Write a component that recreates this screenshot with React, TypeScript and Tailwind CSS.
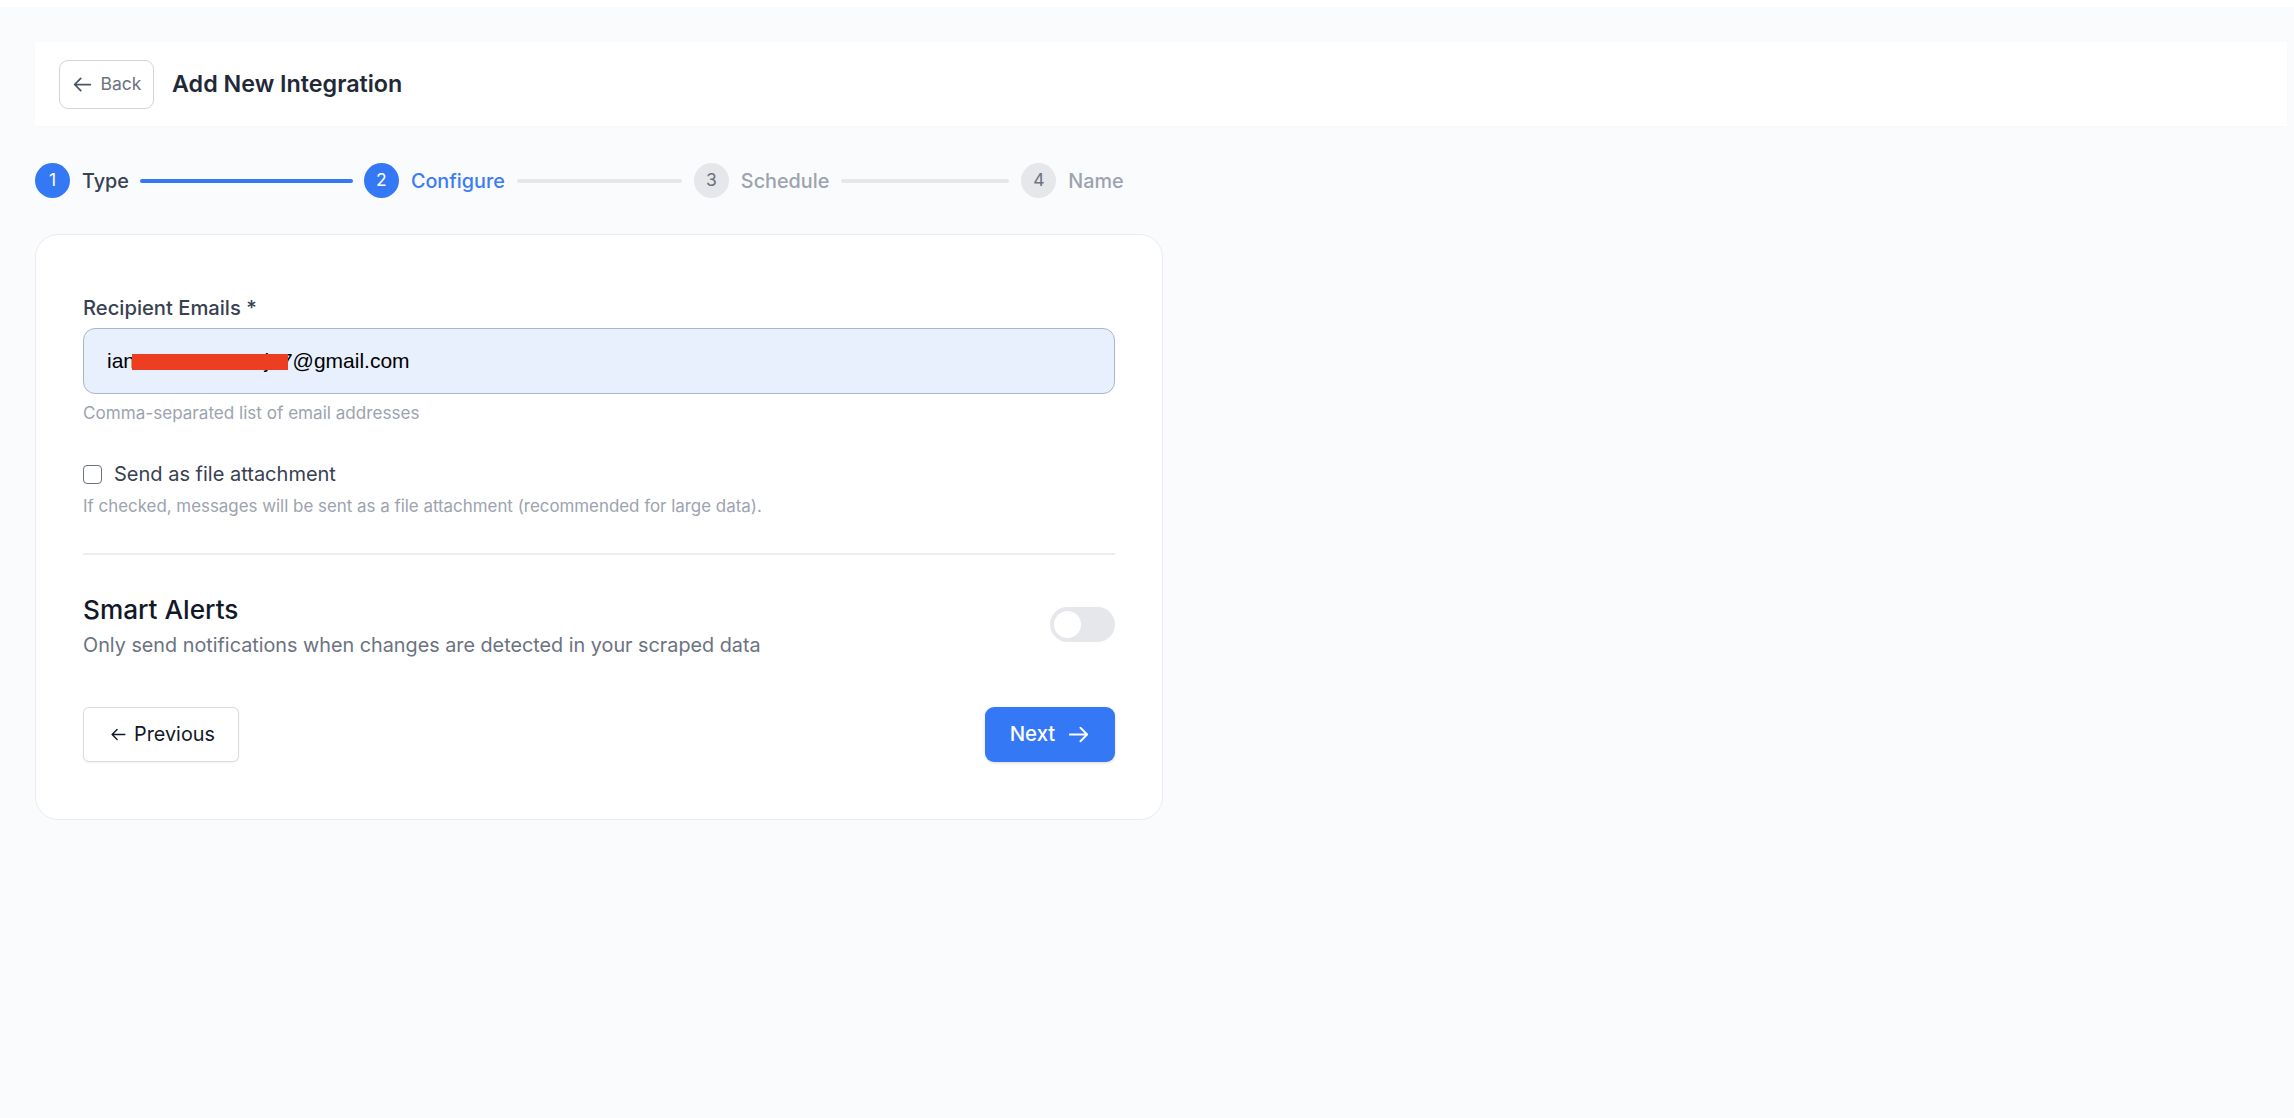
import { HiOutlineArrowLeft, HiOutlineArrowRight } from "react-icons/hi";

const steps = [
  { n: 1, label: "Type", state: "done", line: "mx-[11px] w-[213px] bg-[#3578f6]" },
  { n: 2, label: "Configure", state: "active", line: "mx-3 w-[165px] bg-[#e5e7eb]" },
  { n: 3, label: "Schedule", state: "todo", line: "mx-3 w-[168px] bg-[#e5e7eb]" },
  { n: 4, label: "Name", state: "todo", line: "" },
];

function Stepper() {
  return (
    <div className="mt-[37px] flex items-center">
      {steps.map((s) => (
        <div key={s.n} className="flex items-center">
          <div
            className={`flex h-[35px] w-[35px] items-center justify-center rounded-full text-[17.5px] ${
              s.state === "todo" ? "bg-[#e5e7eb] text-[#6b7280]" : "bg-[#3578f6] text-white"
            }`}
          >
            {s.n}
          </div>
          <span
            className={`ml-3 pt-[2px] text-[19.8px] font-medium ${
              s.state === "done"
                ? "text-[#374151]"
                : s.state === "active"
                  ? "text-[#3b7cf6]"
                  : "text-[#9ca3af]"
            }`}
          >
            {s.label}
          </span>
          {s.line && <div className={`h-1 rounded-full ${s.line}`} />}
        </div>
      ))}
    </div>
  );
}

export default function App() {
  return (
    <div className="min-h-screen bg-white pt-[7px] font-[Inter,sans-serif]">
      <div className="min-h-[1111px] bg-[#fafbfd] pb-[40px] pl-[35px] pr-[7px] pt-[35px]">
        {/* Header */}
        <div className="flex h-[84px] items-center gap-[18px] bg-white pl-[24px] shadow-[0_1px_2px_rgba(0,0,0,0.02)]">
          <button className="flex h-[49px] w-[95px] items-center justify-center gap-[8px] rounded-[9px] border border-[#d1d5db] bg-white text-[17.5px] text-[#6b7280]">
            <HiOutlineArrowLeft className="h-[21px] w-[21px] text-[#4b5563]" />
            Back
          </button>
          <h1 className="pt-[1px] text-[23.3px] font-semibold text-[#1f2937]">Add New Integration</h1>
        </div>

        <Stepper />

        {/* Card */}
        <div className="mt-[36px] flex h-[586px] w-[1128px] flex-col rounded-[23px] border border-[#e9ebef] bg-white px-[47px] pt-[58px]">
          <label className="block text-[20.2px] font-medium leading-[30px] text-[#374151]">
            Recipient Emails *
          </label>
          <div className="relative mt-[5px]">
            <input
              readOnly
              value="ianxxxxxeeexxxxj17@gmail.com"
              className="h-[66px] w-full rounded-[12px] border border-[#a9b5c9] bg-[#e7f0fc] px-[23px] font-['Liberation_Sans',sans-serif] text-[21px] text-black outline-none"
            />
            <div className="absolute left-[49px] top-[26px] h-[16px] w-[156px] bg-[#ee3e22]" />
          </div>
          <p className="mt-[7px] text-[17.1px] leading-[24px] text-[#9ca3af]">
            Comma-separated list of email addresses
          </p>

          <div className="mt-[34px] flex items-center gap-[12px]">
            <div className="h-[19px] w-[19px] rounded-[4px] border-[1.5px] border-[#6b7280] bg-white" />
            <span className="text-[20px] leading-[30px] text-[#374151]">Send as file attachment</span>
          </div>
          <p className="mt-[5px] text-[16.9px] leading-[24px] text-[#9ca3af]">
            If checked, messages will be sent as a file attachment (recommended for large data).
          </p>

          <div className="mt-[35px] h-[2px] bg-[#eceef1]" />

          <div className="mt-[37px] flex items-center justify-between">
            <div>
              <h2 className="text-[26.2px] font-medium leading-[36px] text-[#111827]">Smart Alerts</h2>
              <p className="text-[19.8px] leading-[34px] text-[#6b7280]">
                Only send notifications when changes are detected in your scraped data
              </p>
            </div>
            <div className="mb-[6px] flex h-[35px] w-[65px] items-center rounded-full bg-[#e5e7eb] pl-[4px]">
              <div className="h-[27px] w-[27px] rounded-full bg-white" />
            </div>
          </div>

          <div className="mt-[45px] flex items-center justify-between">
            <button className="flex h-[55px] w-[156px] items-center justify-center gap-[7px] rounded-[6px] border border-[#d8dbe1] bg-white pl-[3px] text-[19.8px] text-[#111827] shadow-[0_1px_2px_rgba(0,0,0,0.05)]">
              <HiOutlineArrowLeft className="h-[17px] w-[17px]" />
              Previous
            </button>
            <button className="flex h-[55px] w-[130px] items-center justify-center gap-[12px] rounded-[9px] bg-[#3578f6] text-[20.4px] font-medium text-white shadow-[0_1px_3px_rgba(0,0,0,0.15)]">
              Next
              <HiOutlineArrowRight className="h-[23px] w-[23px]" />
            </button>
          </div>
        </div>
      </div>
    </div>
  );
}
